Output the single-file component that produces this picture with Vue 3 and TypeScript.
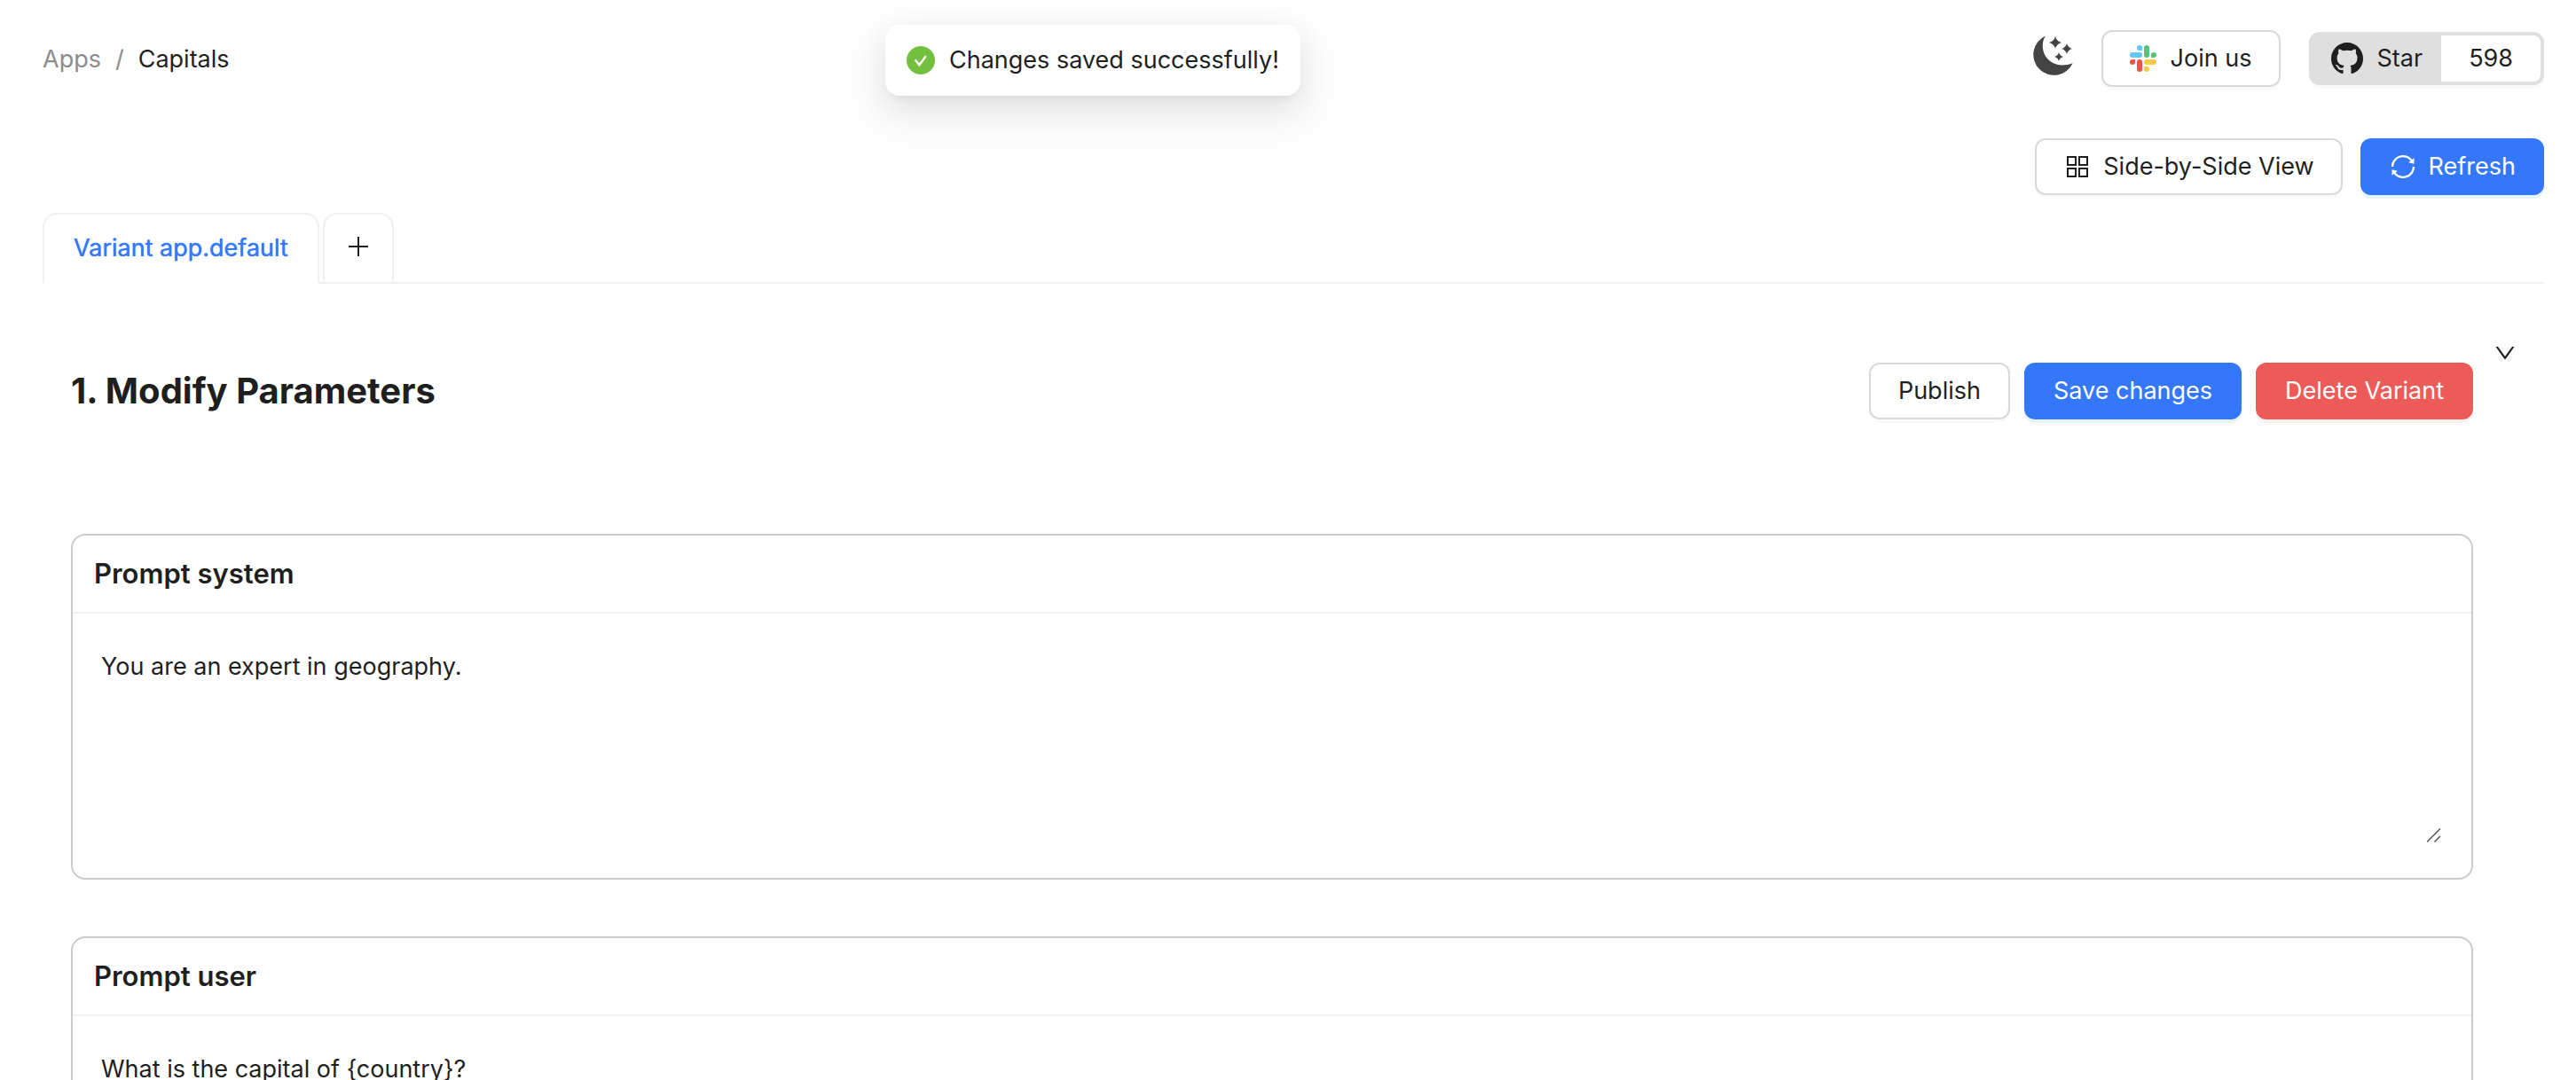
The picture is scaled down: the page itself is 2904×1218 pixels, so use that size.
<script setup lang="ts">
import { ref } from 'vue'

interface Prompt {
  id: string
  title: string
  value: string
}

const prompts = ref<Prompt[]>([
  { id: 'prompt-system', title: 'Prompt system', value: 'You are an expert in geography.' },
  { id: 'prompt-user', title: 'Prompt user', value: 'What is the capital of {country}?' },
])
const expanded = ref(true)
</script>

<template>
  <div class="page">
    <div class="toast" role="status">
      <svg class="icon-32" viewBox="0 0 32 32" aria-hidden="true">
        <circle cx="16" cy="16" r="16" fill="#73c041" />
        <path d="M9.8 15.6l4.6 5.6 7.4-10" fill="none" stroke="#fff" stroke-width="2.4" />
      </svg>
      <span>Changes saved successfully!</span>
    </div>

    <header class="topbar">
      <nav class="breadcrumb" aria-label="Breadcrumb">
        <a href="#apps">Apps</a>
        <span class="slash">/</span>
        <span class="current">Capitals</span>
      </nav>
      <div class="top-actions">
        <button class="theme" type="button" aria-label="Toggle dark mode">
          <svg viewBox="0 0 46 46" width="46" height="46" fill="#444">
            <path d="M15 .4C10.500 7 11 16 14.500 22.500C20 32 32 36.500 45.600 31.200A23.200 23.200 0 1 1 15 .4z" />
            <path d="M26 1q1.500 5.500 7 7q-5.500 1.500-7 7q-1.500-5.500-7-7q5.500-1.500 7-7z" />
            <path d="M39 9q1.300 4.700 6 6q-4.700 1.300-6 6q-1.300-4.700-6-6q4.700-1.300 6-6z" />
            <path d="M30 19q1 4 5 5q-4 1-5 5q-1-4-5-5q4-1 5-5z" />
          </svg>
        </button>
        <button class="btn join" type="button">
          <svg viewBox="0 0 30 30" width="30" height="30" aria-hidden="true">
            <g fill="#64c5fb">
              <rect x="0" y="8" width="14" height="6" rx="3" />
              <path d="M14 6h-3a3 3 0 1 1 3-3z" />
            </g>
            <g fill="#59c279">
              <rect x="16" y="0" width="6" height="14" rx="3" />
              <path d="M24 14v-3a3 3 0 1 1 3 3z" />
            </g>
            <g fill="#ee5148">
              <path d="M6 16v3a3 3 0 1 1-3-3z" />
              <rect x="8" y="16" width="6" height="14" rx="3" />
            </g>
            <g fill="#f7ca45">
              <rect x="16" y="16" width="14" height="6" rx="3" />
              <path d="M16 24h3a3 3 0 1 1-3 3z" />
            </g>
          </svg>
          <span>Join us</span>
        </button>
        <a class="github" href="#github">
          <span class="star">
            <svg viewBox="0 0 16 16" width="36" height="36" fill="#1f1f1f" aria-hidden="true">
              <path d="M8 0C3.580 0 0 3.580 0 8c0 3.540 2.290 6.530 5.470 7.590.4.070.550-.170.550-.380 0-.190-.010-.820-.010-1.490-2.010.370-2.530-.490-2.690-.940-.090-.230-.480-.940-.820-1.130-.280-.150-.680-.520-.010-.530.630-.010 1.080.580 1.230.820.720 1.210 1.870.870 2.330.660.070-.520.280-.870.510-1.070-1.780-.2-3.640-.890-3.640-3.950 0-.870.310-1.590.820-2.150-.080-.2-.360-1.020.080-2.120 0 0 .670-.210 2.200.820.640-.180 1.320-.270 2-.270s1.360.090 2 .270c1.530-1.040 2.200-.820 2.200-.820.440 1.100.160 1.920.080 2.120.510.560.820 1.270.820 2.150 0 3.070-1.870 3.750-3.650 3.950.290.250.540.730.540 1.480 0 1.070-.010 1.930-.010 2.200 0 .210.150.460.550.380A8.010 8.010 0 0 0 16 8c0-4.420-3.580-8-8-8z" />
            </svg>
            <span>Star</span>
          </span>
          <span class="count">598</span>
        </a>
      </div>
    </header>

    <div class="toolbar">
      <button class="btn" type="button">
        <svg class="icon-32" viewBox="0 0 32 32" fill="none" stroke="#1f1f1f" stroke-width="2" aria-hidden="true">
          <path d="M5 5h9v9H5zM18 5h9v9h-9zM5 18h9v9H5zM18 18h9v9h-9z" />
        </svg>
        <span>Side-by-Side View</span>
      </button>
      <button class="btn primary" type="button">
        <svg class="icon-32" viewBox="0 0 1024 1024" fill="currentColor" aria-hidden="true">
          <path d="M168 504.200c1-43.700 10-86.100 26.900-126 17.300-41 42.100-77.700 73.700-109.400S337 212.300 378 195c42.400-17.900 87.400-27 133.900-27s91.500 9.100 133.800 27A341.500 341.500 0 0 1 755 268.800c9.900 9.900 19.200 20.400 27.800 31.400l-60.200 47a8 8 0 0 0 3 14.100l175.700 43c5 1.200 9.900-2.600 9.900-7.700l.8-180.900c0-6.700-7.700-10.500-12.900-6.300l-56.400 44.100C765.800 155.100 646.200 92 511.800 92 282.700 92 96.300 275.600 92 503.800a8 8 0 0 0 8 8.200h60c4.400 0 7.900-3.500 8-7.800zm756 7.800h-60c-4.400 0-7.900 3.500-8 7.800-1 43.700-10 86.100-26.900 126-17.300 41-42.100 77.800-73.700 109.400A342.450 342.450 0 0 1 512.100 856a342.240 342.240 0 0 1-243.200-100.800c-9.900-9.900-19.200-20.400-27.800-31.400l60.200-47a8 8 0 0 0-3-14.100l-175.700-43c-5-1.200-9.900 2.600-9.900 7.700l-.7 181c0 6.700 7.700 10.500 12.900 6.300l56.400-44.100C258.200 868.900 377.800 932 512.200 932c229.200 0 415.500-183.700 419.800-411.800a8 8 0 0 0-8-8.200z" />
        </svg>
        <span>Refresh</span>
      </button>
    </div>

    <div class="tabs" role="tablist">
      <button class="tab active" type="button" role="tab" aria-selected="true">Variant app.default</button>
      <button class="tab add" type="button" aria-label="Add variant">
        <svg viewBox="0 0 22 22" width="22" height="22" fill="none" stroke="#1f1f1f" stroke-width="2">
          <path d="M11 0v22M0 11h22" />
        </svg>
      </button>
    </div>

    <main class="panel">
      <div class="panel-body">
        <div class="section-head">
          <h2>1. Modify Parameters</h2>
          <div class="section-actions">
            <button class="btn" type="button">Publish</button>
            <button class="btn primary" type="button">Save changes</button>
            <button class="btn danger" type="button">Delete Variant</button>
          </div>
        </div>

        <div v-show="expanded" class="cards">
          <section v-for="prompt in prompts" :key="prompt.id" class="card">
            <label class="card-title" :for="prompt.id">{{ prompt.title }}</label>
            <div class="card-body">
              <div class="field">
                <textarea :id="prompt.id" v-model="prompt.value" rows="5" spellcheck="false"></textarea>
                <svg class="grip" viewBox="0 0 16 16" fill="none" stroke="#555" stroke-width="1.500" aria-hidden="true">
                  <path d="M0 15.500L15 .5M8.500 15.500L15 9" />
                </svg>
              </div>
            </div>
          </section>
        </div>
      </div>
      <button class="toggle" type="button" aria-label="Collapse section" :aria-expanded="expanded" @click="expanded = !expanded">
        <svg viewBox="0 0 1024 1024" width="28" height="28" fill="#1f1f1f">
          <path d="M884 256h-75c-5.100 0-9.900 2.500-12.900 6.600L512 654.200 227.900 262.600c-3-4.100-7.800-6.600-12.900-6.600h-75c-6.500 0-10.300 7.400-6.500 12.700l352.600 486.100c12.800 17.600 39 17.600 51.700 0l352.600-486.100c3.900-5.300.1-12.700-6.400-12.700z" />
        </svg>
      </button>
    </main>
  </div>
</template>

<style>
body {
  margin: 0;
  background: #fff;
}
</style>

<style scoped>
.page {
  box-sizing: border-box;
  position: relative;
  height: 100vh;
  overflow: hidden auto;
  scrollbar-width: none;
  padding: 34px 36px 0 48px;
  font-family: Inter, 'Liberation Sans', sans-serif;
  font-size: 27px;
  line-height: 44px;
  color: #1f1f1f;
}

.page * {
  box-sizing: border-box;
}

svg {
  display: block;
  flex: none;
}

button,
textarea {
  font: inherit;
  color: inherit;
  margin: 0;
}

button {
  cursor: pointer;
}

.icon-32 {
  width: 32px;
  height: 32px;
}

.toast {
  position: absolute;
  top: 28px;
  left: 998px;
  z-index: 2;
  display: flex;
  align-items: center;
  gap: 16px;
  padding: 18px 24px;
  border-radius: 16px;
  background: #fff;
  white-space: nowrap;
  box-shadow:
    0 12px 32px rgba(0, 0, 0, 0.08),
    0 6px 12px -8px rgba(0, 0, 0, 0.12),
    0 18px 56px 16px rgba(0, 0, 0, 0.05);
}

.topbar {
  display: flex;
  justify-content: space-between;
  align-items: center;
  height: 64px;
}

.breadcrumb {
  display: flex;
  gap: 16px;
  padding-top: 2px;
}

.breadcrumb a {
  color: #8c8c8c;
  text-decoration: none;
}

.slash {
  color: #8c8c8c;
}

.top-actions {
  display: flex;
  align-items: center;
}

.theme,
.toggle {
  padding: 0;
  border: 0;
  background: none;
}

.theme {
  margin-right: 32px;
  padding-bottom: 6px;
}

.btn {
  display: inline-flex;
  align-items: center;
  justify-content: center;
  gap: 16px;
  height: 64px;
  padding: 0 30px;
  border: 2px solid #d9d9d9;
  border-radius: 12px;
  background: #fff;
  white-space: nowrap;
  box-shadow: 0 4px 0 rgba(0, 0, 0, 0.02);
}

.btn.primary {
  border-color: #3478f9;
  background: #3478f9;
  color: #fff;
  box-shadow: 0 4px 0 rgba(5, 145, 255, 0.1);
}

.btn.danger {
  border-color: #ec5b58;
  background: #ec5b58;
  color: #fff;
  box-shadow: 0 4px 0 rgba(255, 38, 5, 0.06);
}

.join {
  margin-right: 32px;
}

.github {
  display: flex;
  height: 60px;
  border: 4px solid #dfdfdf;
  border-radius: 12px;
  background: #dfdfdf;
  color: inherit;
  text-decoration: none;
  box-shadow: 0 4px 0 rgba(0, 0, 0, 0.02);
}

.star {
  display: flex;
  align-items: center;
  gap: 16px;
  padding: 0 21px;
}

.count {
  display: flex;
  align-items: center;
  padding: 0 31px;
  border-radius: 0 8px 8px 0;
  background: #fff;
}

.toolbar {
  display: flex;
  justify-content: flex-end;
  gap: 20px;
  margin-top: 58px;
}

.toolbar .btn {
  gap: 13px;
}

.tabs {
  display: flex;
  gap: 4px;
  height: 80px;
  margin-top: 20px;
  box-shadow: inset 0 -2px 0 #f0f0f0;
}

.tab {
  display: flex;
  align-items: center;
  padding: 0 33px;
  border: 2px solid #f0f0f0;
  border-radius: 16px 16px 0 0;
  background: #fff;
}

.tab.active {
  border-bottom-color: #fff;
  color: #3478f9;
  text-shadow: 0 0 1px currentColor;
}

.tab.add {
  width: 80px;
  padding: 0 0 4px;
  justify-content: center;
}

.panel {
  display: flex;
  align-items: flex-start;
  padding: 64px 30px 64px 32px;
}

.panel-body {
  flex: 1;
  min-width: 0;
  padding-top: 25px;
}

.toggle {
  margin-left: 22px;
}

.section-head {
  display: flex;
  align-items: center;
  justify-content: space-between;
}

h2 {
  margin: 0;
  font-size: 40px;
  font-weight: 700;
  line-height: 64px;
}

.section-actions {
  display: flex;
  gap: 16px;
}

.section-actions .btn {
  padding: 0 31px;
}

.cards {
  display: flex;
  flex-direction: column;
  gap: 64px;
  margin-top: 129px;
}

.card {
  border: 2px solid #cbcbcb;
  border-radius: 16px;
}

.card-title {
  display: block;
  padding: 21px 24px;
  border-bottom: 2px solid #f0f0f0;
  font-size: 31px;
  font-weight: 600;
}

.card-body {
  padding: 38px 32px 40px;
}

.field {
  position: relative;
}

textarea {
  display: block;
  width: 100%;
  padding: 0;
  border: 0;
  outline: 0;
  background: none;
  resize: none;
}

.grip {
  position: absolute;
  right: 2px;
  bottom: 0;
  width: 16px;
  height: 16px;
}
</style>
